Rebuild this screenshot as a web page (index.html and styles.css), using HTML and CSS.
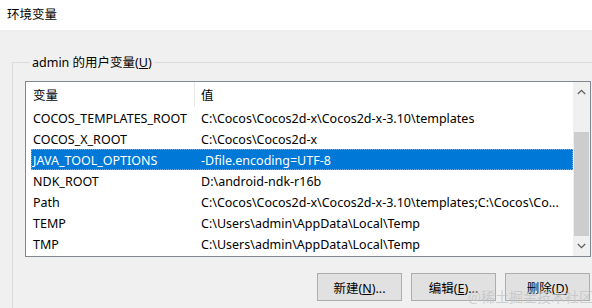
FILE: index.html
```html
<!DOCTYPE html>
<html lang="zh-CN">
<head>
<meta charset="utf-8">
<title>环境变量</title>
<link rel="stylesheet" href="styles.css">
</head>
<body>
<div class="titlebar">环境变量</div>
<div class="dialog">
  <fieldset class="group">
    <legend class="group-label">admin 的用户变量(<u>U</u>)</legend>
    <div class="listbox">
      <div class="list">
        <div class="list-header">
          <div class="col-name">变量</div>
          <div class="col-value">值</div>
        </div>
        <div class="row"><div class="col-name">COCOS_TEMPLATES_ROOT</div><div class="col-value">C:\Cocos\Cocos2d-x\Cocos2d-x-3.10\templates</div></div>
        <div class="row"><div class="col-name">COCOS_X_ROOT</div><div class="col-value">C:\Cocos\Cocos2d-x</div></div>
        <div class="row selected"><div class="col-name">JAVA_TOOL_OPTIONS</div><div class="col-value">-Dfile.encoding=UTF-8</div></div>
        <div class="row"><div class="col-name">NDK_ROOT</div><div class="col-value">D:\android-ndk-r16b</div></div>
        <div class="row"><div class="col-name">Path</div><div class="col-value">C:\Cocos\Cocos2d-x\Cocos2d-x-3.10\templates;C:\Cocos\Co...</div></div>
        <div class="row"><div class="col-name">TEMP</div><div class="col-value">C:\Users\admin\AppData\Local\Temp</div></div>
        <div class="row"><div class="col-name">TMP</div><div class="col-value">C:\Users\admin\AppData\Local\Temp</div></div>
      </div>
      <div class="scrollbar">
        <div class="sb-arrow">
          <svg width="9" height="6" viewBox="0 0 9 6"><polyline points="0.8,5 4.5,1.3 8.2,5" fill="none" stroke="#606060" stroke-width="1.3"/></svg>
        </div>
        <div class="sb-track">
          <div class="sb-thumb"></div>
        </div>
        <div class="sb-arrow">
          <svg width="9" height="6" viewBox="0 0 9 6"><polyline points="0.8,1 4.5,4.7 8.2,1" fill="none" stroke="#606060" stroke-width="1.3"/></svg>
        </div>
      </div>
    </div>
    <div class="buttons">
      <button class="btn">新建(<u>N</u>)...</button>
      <button class="btn">编辑(<u>E</u>)...</button>
      <button class="btn">删除(<u>D</u>)</button>
    </div>
  </fieldset>
  <span class="watermark">@稀土掘金技术社区</span>
</div>
</body>
</html>
```

FILE: styles.css
```css
html, body {
  margin: 0;
  padding: 0;
}
body {
  width: 592px;
  height: 308px;
  overflow: hidden;
  font-family: "Noto Sans", "Noto Sans CJK SC", sans-serif;
  font-size: 12.5px;
  color: #000;
  background: #f0f0f0;
}
.titlebar {
  height: 30px;
  line-height: 30px;
  padding-left: 7px;
  background: #fff;
  font-size: 12.5px;
}
.dialog {
  position: relative;
  height: 278px;
  padding: 24px 0 0 12px;
  box-sizing: border-box;
  background: #f0f0f0;
  overflow: hidden;
}
.group {
  margin: 0;
  padding: 10px 0 0 12px;
  border: 1px solid #dcdcdc;
  border-right: none;
  border-bottom: none;
  height: 254px;
  box-sizing: border-box;
  min-width: 0;
}
.group-label {
  margin-left: 5px;
  padding: 1px 2px 0;
  line-height: 16px;
  height: 16px;
}
.listbox {
  display: flex;
  width: 566px;
  height: 176px;
  box-sizing: border-box;
  border: 1px solid #828790;
  background: #fff;
}
.list {
  flex: 1;
  min-width: 0;
  overflow: hidden;
}
.list-header {
  display: flex;
  height: 25px;
  align-items: flex-start;
}
.list-header .col-name {
  padding-left: 2px;
  height: 25px;
  line-height: 27px;
  border-right: 1px solid #e5e5e5;
  box-sizing: border-box;
  margin-left: 5px;
  width: 164px;
}
.list-header .col-value {
  padding-left: 6px;
  line-height: 27px;
}
.row {
  display: flex;
  height: 21px;
  line-height: 23px;
  margin-left: 5px;
  white-space: nowrap;
}
.row .col-name {
  width: 164px;
  height: 21px;
  padding-left: 2px;
  box-sizing: border-box;
  flex: none;
}
.row .col-value {
  padding-left: 6px;
  height: 21px;
  min-width: 0;
  overflow: hidden;
  text-overflow: ellipsis;
}
.row.selected {
  background: #0078d7;
  color: #fff;
  outline: 1px dotted #6fb0e6;
  outline-offset: -1px;
}
.scrollbar {
  width: 17px;
  flex: none;
  display: flex;
  flex-direction: column;
  background: #f0f0f0;
}
.sb-arrow {
  height: 20px;
  display: flex;
  align-items: center;
  justify-content: center;
  flex: none;
}
.sb-track {
  flex: 1;
  display: flex;
  flex-direction: column;
  justify-content: flex-end;
  padding: 0 1px;
}
.sb-thumb {
  height: 104px;
  background: #cdcdcd;
}
.buttons {
  display: flex;
  justify-content: flex-end;
  gap: 9px;
  width: 566px;
  margin-top: 16px;
  padding-right: 1px;
  box-sizing: border-box;
}
.btn {
  width: 85px;
  height: 28px;
  background: #e1e1e1;
  border: 1px solid #adadad;
  font-family: "Noto Sans", "Noto Sans CJK SC", sans-serif;
  font-size: 12.5px;
  color: #000;
  padding: 0;
}
.watermark {
  position: absolute;
  right: -1px;
  bottom: 2px;
  font-size: 14px;
  color: rgba(196, 196, 196, 0.8);
  font-family: "Noto Sans CJK SC", sans-serif;
  pointer-events: none;
}
```
